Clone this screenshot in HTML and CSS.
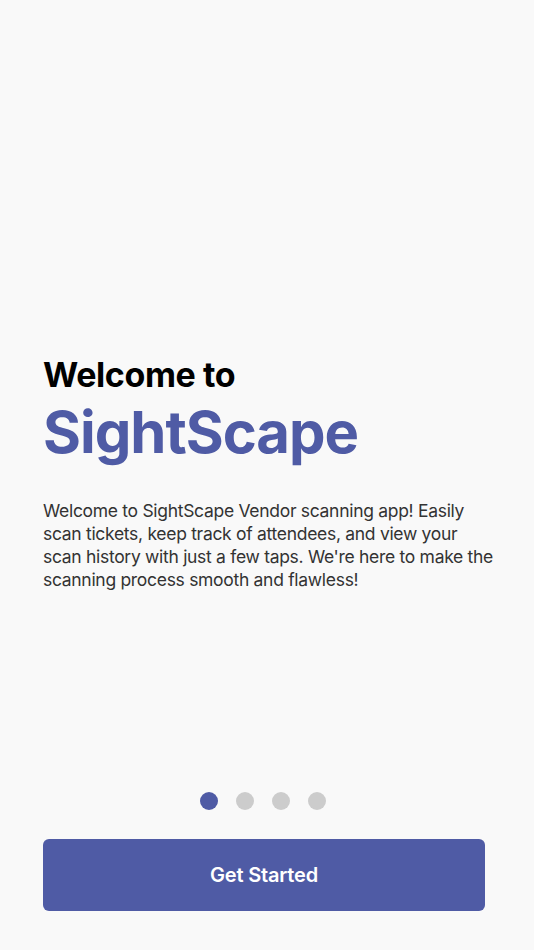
FILE: index.html
```html
<!DOCTYPE html>
<html>
<head>
<meta charset="utf-8">
<link rel="stylesheet" href="styles.css">
</head>
<body>
<div class="screen">
  <div class="intro">
    <h2 class="pre">Welcome to</h2>
    <h1 class="brand">SightScape</h1>
    <p class="desc">Welcome to SightScape Vendor scanning app! Easily scan tickets, keep track of attendees, and view your scan history with just a few taps. We're here to make the scanning process smooth and flawless!</p>
  </div>
  <div class="dots">
    <span class="dot active"></span>
    <span class="dot"></span>
    <span class="dot"></span>
    <span class="dot"></span>
  </div>
  <button class="cta">Get Started</button>
</div>
</body>
</html>
```
FILE: styles.css
```css
html, body {
  margin: 0;
  padding: 0;
  background: #f9f9f9;
}
body {
  font-family: Inter, "Noto Sans", sans-serif;
}
.screen {
  height: 950px;
  box-sizing: border-box;
  padding: 0 43px 39px 43px;
  display: flex;
  flex-direction: column;
}
.intro {
  padding-top: 355px;
}
.pre {
  margin: 0;
  font-size: 34px;
  font-weight: 700;
  line-height: 40px;
  color: #000;
  letter-spacing: -0.4px;
}
.brand {
  margin: 2px 0 0;
  font-size: 58px;
  font-weight: 700;
  line-height: 70px;
  color: #4f5ba5;
  letter-spacing: -1px;
}
.desc {
  margin: 32px -6px 0 0;
  font-size: 17.5px;
  line-height: 23px;
  color: #333;
  letter-spacing: -0.3px;
}
.dots {
  margin-top: auto;
  display: flex;
  justify-content: center;
  gap: 18px;
  padding-right: 8px;
  margin-bottom: 29px;
}
.dot {
  width: 18px;
  height: 18px;
  border-radius: 50%;
  background: #cccccc;
}
.dot.active {
  background: #4f5ba5;
}
.cta {
  height: 72px;
  width: 442px;
  border: none;
  border-radius: 6px;
  background: #4f5ba5;
  color: #fff;
  font-family: Inter, "Noto Sans", sans-serif;
  font-size: 20px;
  font-weight: 600;
  letter-spacing: -0.2px;
}
```
